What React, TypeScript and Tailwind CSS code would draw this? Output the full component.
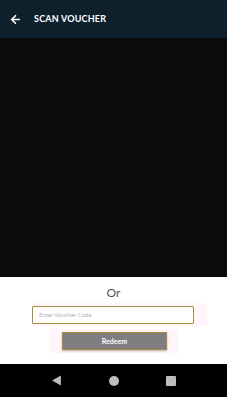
import { ArrowLeft } from 'lucide-react';

const App = () => {
  return (
    <div className="w-[227px] h-[397px] flex flex-col bg-white overflow-hidden" style={{ fontFamily: 'Lato, "Liberation Sans", sans-serif' }}>
      {/* Header */}
      <div className="h-[38px] shrink-0 bg-[#0f202d] flex items-center pl-[9px] gap-[12px]">
        <ArrowLeft size={13} strokeWidth={3} className="text-white" />
        <span className="text-white text-[9px] font-bold tracking-[0.2px]">SCAN VOUCHER</span>
      </div>

      {/* Camera preview */}
      <div className="h-[239px] shrink-0 bg-[#0b0b0b]" />

      {/* Manual entry */}
      <div className="flex-1 flex flex-col">
        <div className="mt-[8px] text-[12px] leading-[16px] text-[#555] text-center">Or</div>
        <div className="mt-[2px] ml-[32px] w-[175px] h-[23px] bg-[#fff5fa] flex items-center">
          <input
            placeholder="Enter Voucher Code"
            className="w-[162px] h-[18px] border-[1.5px] border-[#a88a3c] rounded-[1px] bg-white px-[6px] text-[6px] outline-none placeholder:text-[#b9aeb8]"
          />
        </div>
        <div className="mt-[3px] ml-[49px] w-[130px] h-[24px] bg-[#fff5fa] flex items-center pl-[13px]">
          <button className="w-[105px] h-[18px] bg-[#7f7d7f] border-[1.5px] border-[#a88a3c] text-white text-[7px] font-bold shadow-[0_1px_2px_rgba(0,0,0,0.3)]">
            Redeem
          </button>
        </div>
      </div>

      {/* Nav bar */}
      <div className="h-[33px] shrink-0 bg-black flex items-center justify-center gap-[47px]">
        <svg width="11" height="11" viewBox="0 0 10 10">
          <polygon points="9,0.5 9,9.5 1,5" fill="#bdbdbd" />
        </svg>
        <span className="w-[10px] h-[10px] rounded-full bg-[#bdbdbd]" />
        <span className="w-[10px] h-[10px] rounded-[1px] bg-[#bdbdbd]" />
      </div>
    </div>
  );
};

export default App;
